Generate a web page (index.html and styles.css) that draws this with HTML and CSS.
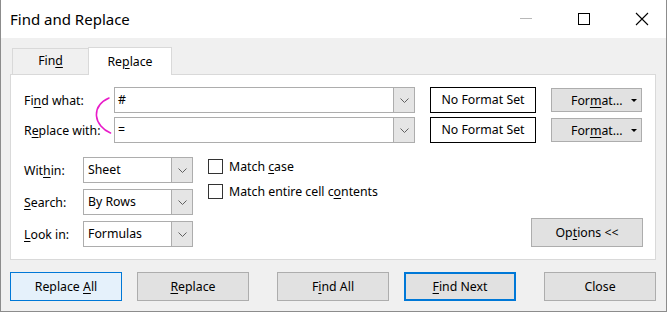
FILE: index.html
```html
<!DOCTYPE html>
<html lang="en">
<head>
    <meta charset="UTF-8">
    <title>Find and Replace</title>
    <link rel="stylesheet" href="styles.css">
</head>
<body>
<div class="window">
    <div class="titlebar">
        <span class="title">Find and Replace</span>
        <div class="controls">
            <svg class="ctl" width="46" height="38" viewBox="0 0 46 38"><line x1="17" y1="18.5" x2="29" y2="18.5" stroke="#b8b8b8" stroke-width="1"/></svg>
            <svg class="ctl" width="46" height="38" viewBox="0 0 46 38"><rect x="17.5" y="13.5" width="11" height="11" fill="none" stroke="#000" stroke-width="1"/></svg>
            <svg class="ctl" width="46" height="38" viewBox="0 0 46 38"><path d="M17 13 L29 25 M29 13 L17 25" stroke="#000" stroke-width="1.1"/></svg>
        </div>
    </div>

    <div class="tabs">
        <div class="tab">Fin<u>d</u></div>
        <div class="tab active">Re<u>p</u>lace</div>
    </div>

    <section class="panel">
        <div class="find-grid">
            <label>Fi<u>n</u>d what:</label>
            <div class="combo wide"><span class="value">#</span><span class="arrow"><svg width="9" height="5" viewBox="0 0 9 5"><polyline points="0.5,0.5 4.5,4.5 8.5,0.5" fill="none" stroke="#606060"/></svg></span></div>
            <div class="format-set">No Format Set</div>
            <button class="btn format">For<u>m</u>at...<span class="tri"></span></button>

            <label>R<u>e</u>place with:</label>
            <div class="combo wide"><span class="value">=</span><span class="arrow"><svg width="9" height="5" viewBox="0 0 9 5"><polyline points="0.5,0.5 4.5,4.5 8.5,0.5" fill="none" stroke="#606060"/></svg></span></div>
            <div class="format-set">No Format Set</div>
            <button class="btn format">For<u>m</u>at...<span class="tri"></span></button>
        </div>

        <div class="lower">
            <div class="opt-grid">
                <label>Wit<u>h</u>in:</label>
                <div class="combo"><span class="value">Sheet</span><span class="arrow"><svg width="9" height="5" viewBox="0 0 9 5"><polyline points="0.5,0.5 4.5,4.5 8.5,0.5" fill="none" stroke="#606060"/></svg></span></div>
                <label><u>S</u>earch:</label>
                <div class="combo"><span class="value">By Rows</span><span class="arrow"><svg width="9" height="5" viewBox="0 0 9 5"><polyline points="0.5,0.5 4.5,4.5 8.5,0.5" fill="none" stroke="#606060"/></svg></span></div>
                <label><u>L</u>ook in:</label>
                <div class="combo"><span class="value">Formulas</span><span class="arrow"><svg width="9" height="5" viewBox="0 0 9 5"><polyline points="0.5,0.5 4.5,4.5 8.5,0.5" fill="none" stroke="#606060"/></svg></span></div>
            </div>
            <div class="checks">
                <div class="check"><span class="box"></span><span class="text">Match <u>c</u>ase</span></div>
                <div class="check"><span class="box"></span><span class="text">Match entire cell c<u>o</u>ntents</span></div>
            </div>
            <button class="btn options">Op<u>t</u>ions &lt;&lt;</button>
        </div>
    </section>

    <div class="actions">
        <button class="btn action default">Replace <u>A</u>ll</button>
        <button class="btn action"><u>R</u>eplace</button>
        <button class="btn action gap">F<u>i</u>nd All</button>
        <button class="btn action focus"><u>F</u>ind Next</button>
        <button class="btn action gap">Close</button>
    </div>

    <svg class="mark" width="20" height="44" viewBox="0 0 20 44"><path d="M14 3 C 5 7, 1 14, 1.5 21 C 2 28, 8 35, 15.5 38" fill="none" stroke="#e81cc8" stroke-width="1.6" stroke-linecap="round"/></svg>
</div>
</body>
</html>
```

FILE: styles.css
```css
* {
    box-sizing: border-box;
}
body {
    margin: 0;
    font-family: "Noto Sans", "Open Sans", sans-serif;
    font-size: 12.3px;
    color: #000;
}
.window {
    position: relative;
    width: 667px;
    height: 312px;
    background: #f0f0f0;
    border: 1px solid #8c8c8c;
    border-top: none;
}
.titlebar {
    height: 38px;
    background: #fff;
    display: flex;
    align-items: center;
    justify-content: space-between;
}
.title {
    padding-left: 9px;
    font-size: 15px;
    padding-bottom: 1px;
}
.controls {
    display: flex;
    margin-right: 1px;
}
.ctl {
    display: block;
    margin-left: 12px;
}
.tabs {
    display: flex;
    align-items: flex-end;
    margin-top: 9px;
    padding-left: 11px;
    position: relative;
    z-index: 2;
}
.tab {
    width: 77px;
    height: 26px;
    border: 1px solid #d9d9d9;
    border-bottom: none;
    text-align: center;
    line-height: 24px;
}
.tab.active {
    width: 84px;
    height: 28px;
    background: #fff;
    margin-bottom: -1px;
    margin-left: -1px;
    line-height: 27px;
}
u {
    text-underline-offset: 2px;
}
.panel {
    margin-left: 9px;
    width: 646px;
    height: 186px;
    background: #fff;
    border: 1px solid #d9d9d9;
    padding: 12px 12px 0 13px;
}
.find-grid {
    display: grid;
    grid-template-columns: 75px 301px 106px 91px;
    grid-auto-rows: 26px;
    column-gap: 15px;
    row-gap: 4px;
    align-items: center;
}
label {
    white-space: nowrap;
}
.combo {
    display: flex;
    height: 26px;
    background: #fff;
    border: 1px solid #adadad;
}
.combo .value {
    flex: 1;
    padding-left: 4px;
    line-height: 24px;
}
.combo.wide .value {
    padding-left: 3px;
}
.combo .arrow {
    width: 21px;
    background: #e5e5e5;
    border-left: 1px solid #adadad;
    display: flex;
    align-items: center;
    justify-content: center;
}
.format-set {
    height: 26px;
    border: 1px solid #000;
    text-align: center;
    line-height: 24px;
}
.btn {
    font-family: inherit;
    font-size: 12.3px;
    color: #000;
    background: #e1e1e1;
    border: 1px solid #adadad;
    padding: 0;
}
.format {
    height: 24px;
    position: relative;
    text-align: left;
    padding-left: 19px;
}
.tri {
    position: absolute;
    right: 4px;
    top: 10px;
    border-left: 3px solid transparent;
    border-right: 3px solid transparent;
    border-top: 3px solid #000;
}
.lower {
    display: flex;
    margin-top: 14px;
}
.opt-grid {
    display: grid;
    grid-template-columns: 59px 110px;
    grid-auto-rows: 26px;
    row-gap: 6px;
    align-items: center;
}
.checks {
    margin-left: 15px;
    padding-top: 2px;
}
.check {
    display: flex;
    align-items: center;
    height: 15px;
    margin-bottom: 10px;
    white-space: nowrap;
}
.box {
    width: 15px;
    height: 15px;
    border: 1px solid #333;
    background: #fff;
    margin-right: 6px;
}
.check .text {
    line-height: 15px;
    margin-top: -1px;
}
.options {
    margin-left: auto;
    align-self: flex-end;
    width: 112px;
    height: 29px;
}
.actions {
    display: flex;
    margin-top: 12px;
    padding-left: 9px;
    gap: 15px;
}
.action {
    width: 112px;
    height: 29px;
}
.action.gap {
    margin-left: 13px;
}
.action.default {
    background: #e5f1fb;
    border-color: #0078d7;
}
.action.focus {
    border: 2px solid #0078d7;
}
.mark {
    position: absolute;
    left: 94px;
    top: 95px;
}
```
